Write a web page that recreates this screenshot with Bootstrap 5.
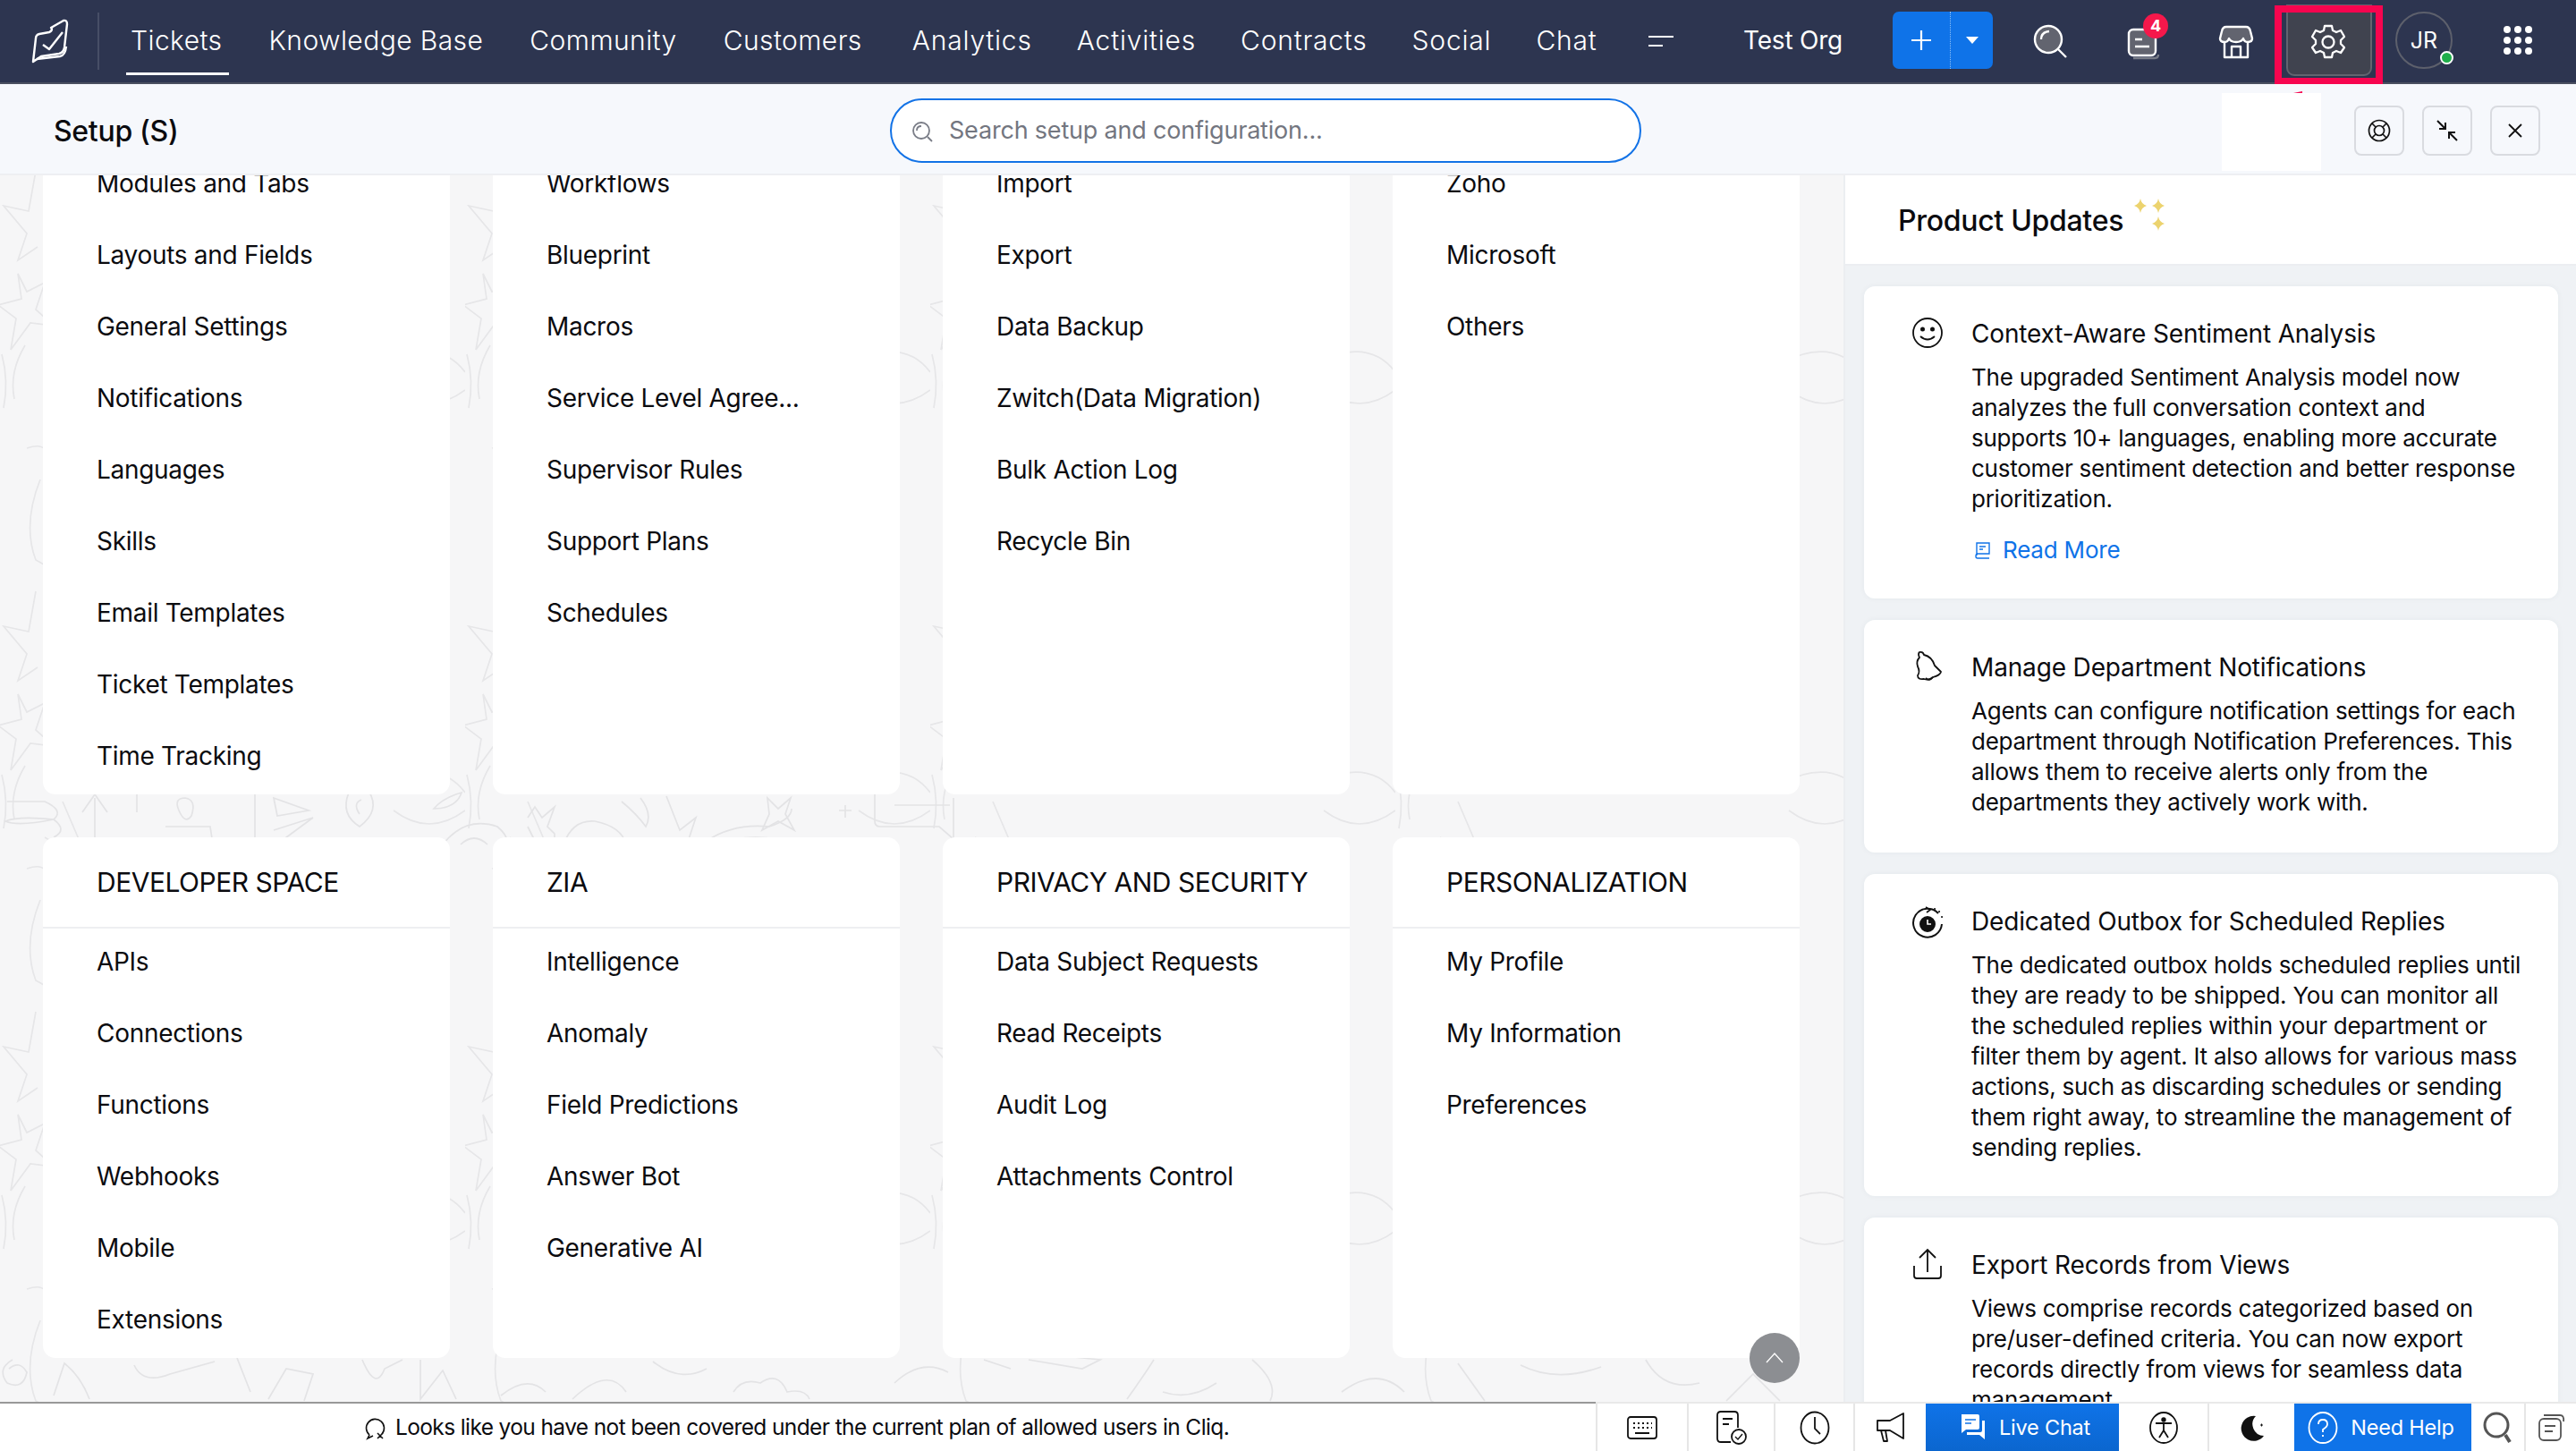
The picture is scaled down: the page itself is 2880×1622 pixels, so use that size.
<!DOCTYPE html>
<html lang="en">
<head>
  <meta charset="UTF-8">
  <meta name="viewport" content="width=device-width, initial-scale=1.0">
  <title>Setup</title>
  <link href="https://cdn.jsdelivr.net/npm/bootstrap@5.3.0/dist/css/bootstrap.min.css" rel="stylesheet">
  <script src="https://cdn.jsdelivr.net/npm/bootstrap@5.3.0/dist/js/bootstrap.bundle.min.js"></script>
  <style>
    html, body { height: 100%; }
    body {
      font-family: Inter, "Liberation Sans", sans-serif;
      color: #0b0b0f;
      overflow: hidden;
      letter-spacing: -0.2px;
    }
    svg { display: block; }
    .app-shell { height: 1622px; }

    /* top bar */
    .topbar { height: 94px; background: #2d3550; border-bottom: 2px solid #4a4f5f; color: #fff; position: relative; }
    .top-logo { width: 111px; height: 64px; border-right: 2px solid #474e66; padding-left: 35px; }
    .top-nav { padding-left: 9px; height: 92px; }
    .top-link { color: #fff; font-size: 30px; text-decoration: none; height: 100%; line-height: 90px; padding: 0 26px; letter-spacing: .42px; font-weight: 300; position: relative; }
    .top-link:nth-child(n+5) { letter-spacing: .8px; padding: 0 25px; }
    .top-link:nth-child(5) { margin-left: 5px; }
    .top-link.active::after { content: ""; position: absolute; left: 21px; right: 19px; top: 81px; height: 3px; background: #fff; }
    .nav-more { margin-left: 31px; }
    .org-name { font-size: 28px; position: absolute; left: 1949px; top: 24px; font-weight: 400; }
    .add-btn { position: absolute; left: 2116px; top: 13px; width: 112px; height: 64px; background: #0f73e8; border-radius: 7px; }
    .add-btn span { border-right: 1px dotted #8fc0f5; width: 65px; }
    .top-icon { position: absolute; top: 14px; width: 64px; height: 64px; }
    .count-pill { position: absolute; left: 2396px; top: 15px; width: 28px; height: 28px; border-radius: 50%; background: #f5184b; color: #fff; font-size: 18px; font-weight: 700; text-align: center; line-height: 28px; letter-spacing: 0; }
    .gear-box { position: absolute; left: 2556px; top: 5px; width: 96px; height: 80px; background: #40434f; border: 2px solid #62646f; border-radius: 0 0 9px 9px; }
    .mark-box { position: absolute; left: 2543px; top: 6px; width: 121px; height: 89px; border: 8px solid #f7054f; }
    .avatar-ring { position: absolute; left: 2678px; top: 13px; width: 64px; height: 64px; border: 2px solid #5d606c; border-radius: 50%; font-size: 25px; line-height: 60px; text-align: center; letter-spacing: 0; }
    .online-dot { position: absolute; left: 2728px; top: 57px; width: 15px; height: 15px; border-radius: 50%; background: #1fae4a; border: 2px solid #fff; }
    .apps-grid { position: absolute; left: 2799px; top: 29px; display: grid; grid-template-columns: repeat(3, 8px); gap: 4px; }
    .apps-grid i { width: 8px; height: 8px; border-radius: 50%; background: #fff; }

    /* setup header */
    .setup-head { height: 102px; background: #f6f8fc; border-bottom: 2px solid #eeeff2; position: relative; flex: none; }
    .setup-title { font-size: 32px; font-weight: 500; padding-left: 60px; line-height: 106px; letter-spacing: -.3px; }
    .setup-search { position: absolute; left: 995px; top: 16px; width: 840px; height: 72px; background: #fff; border: 2px solid #1272e6; border-radius: 36px; padding-left: 20px; color: #737680; font-size: 27px; padding-top: 1px; }
    .blank-box { position: absolute; left: 2484px; top: 10px; width: 111px; height: 87px; background: #fff; }
    .blank-tip { position: absolute; left: 2564px; top: 8px; width: 0; height: 0; border-left: 10px solid transparent; border-bottom: 2px solid #f7054f; }
    .head-btn { position: absolute; top: 24px; width: 56px; height: 56px; border: 2px solid #d9dbe0; border-radius: 8px; background: #f6f8fc; }

    /* setup cards */
    .setup-body { height: 1371px; flex: none; min-height: 0; }
    .setup-left { width: 2061px; background: #f6f6f7; position: relative; overflow: hidden; flex: none; }
    .doodles { position: absolute; inset: 0; width: 100%; height: 100%; }
    .setup-grid { position: relative; display: grid; grid-template-columns: repeat(4, 455px); column-gap: 48px; row-gap: 48px; padding: 0 0 0 48px; margin-top: -32px; }
    .setup-card { background: #fff; border-radius: 0 0 14px 14px; padding-bottom: 4px; }
    .setup-card.lower { border-radius: 14px; padding-bottom: 3px; }
    .setup-card-head { height: 102px; border-bottom: 2px solid #eeeff1; padding-left: 60px; font-size: 30px; line-height: 100px; letter-spacing: -.5px; }
    .setup-list { list-style: none; margin: -3px 0 0; padding: 0; }
    .upper .setup-list { margin-top: 0; }
    .setup-list li { height: 80px; line-height: 80px; padding: 0 0 0 60px; font-size: 28px; white-space: nowrap; letter-spacing: -.3px; }
    .upper .setup-list li { padding-top: 1px; }
    .to-top { position: absolute; left: 1956px; top: 1294px; width: 56px; height: 56px; border-radius: 50%; background: #8c8e92; display: flex; align-items: center; justify-content: center; }

    /* updates panel */
    .updates { width: 819px; background: #eff2f5; border-left: 2px solid #eceef1; overflow: hidden; flex: none; }
    .updates-head { height: 101px; background: #fff; border-bottom: 2px solid #eceef1; padding-left: 59px; font-size: 32px; font-weight: 500; line-height: 101px; position: relative; letter-spacing: -.3px; }
    .sparkles { position: absolute; left: 322px; top: 20px; }
    .update-list { padding: 23px 20px 0 21px; gap: 24px; }
    .update-item { background: #fff; border-radius: 12px; padding: 33px 20px 0 120px; position: relative; box-shadow: 0 0 6px rgba(40,50,70,.05); }
    .update-icon { position: absolute; left: 53px; top: 34px; }
    .update-item h6 { font-size: 28px; line-height: 40px; font-weight: 400; margin: 0 0 12px; letter-spacing: -.15px; color: #0b0b0f; }
    .update-item p { font-size: 26px; line-height: 34px; margin: 0; letter-spacing: -.25px; max-width: 620px; }
    .read-more { color: #0f73e8; font-size: 26px; text-decoration: none; margin: 20px 0 0 4px; gap: 13px; }

    /* footer */
    .bottom-bar { height: 55px; flex: none; background: #fff; position: relative; border-top: 2px solid #e9e9e9; }
    .bottom-line { position: absolute; left: 0; top: -2px; width: 1784px; height: 2px; background: #999; }
    .cliq-msg { width: 1784px; padding-left: 407px; gap: 9px; font-size: 24.500px; letter-spacing: -.62px; }
    .foot-cell { height: 53px; border-left: 2px solid #e6e6e6; display: flex; align-items: center; justify-content: center; flex: none; }
    .foot-blue { background: #0f73e8; color: #fff; font-size: 23.500px; gap: 14px; border: 0; }
    .foot-blue.chat { background: linear-gradient(#0f73e8, #0b66cf); padding-left: 6px; }
  </style>
</head>
<body>
  <div class="app-shell d-flex flex-column">

    <header class="topbar d-flex align-items-center flex-none">
      <div class="top-logo d-flex align-items-center">
        <svg width="42" height="50" viewBox="0 0 42 50" fill="none" stroke="#fff" stroke-width="2.4" stroke-linejoin="round"><path d="M22 10L36 2Q40 1 40 6L37 32Q36 38 31 39L11 42L2 48L5 22Q5 18 9 17L20 15Q23 14 23 11Z"/><path d="M13 29L20 34L35 15"/><path d="M6 45L32 42Q38 41 39 31"/></svg>
      </div>
      <nav class="top-nav d-flex align-items-center">
        <a class="top-link active" href="#">Tickets</a>
        <a class="top-link" href="#">Knowledge Base</a>
        <a class="top-link" href="#">Community</a>
        <a class="top-link" href="#">Customers</a>
        <a class="top-link" href="#">Analytics</a>
        <a class="top-link" href="#">Activities</a>
        <a class="top-link" href="#">Contracts</a>
        <a class="top-link" href="#">Social</a>
        <a class="top-link" href="#">Chat</a>
        <svg class="nav-more" width="30" height="14" viewBox="0 0 30 14" stroke="#fff" stroke-width="2"><path d="M1 2H29M1 12H17"/></svg>
      </nav>
      <span class="org-name">Test Org</span>
      <div class="add-btn d-flex">
        <span class="d-flex align-items-center justify-content-center">
          <svg width="24" height="24" viewBox="0 0 24 24" stroke="#fff" stroke-width="2.2"><path d="M12 1V23M1 12H23"/></svg>
        </span>
        <div class="flex-grow-1 d-flex align-items-center justify-content-center">
          <svg width="14" height="10" viewBox="0 0 14 10" fill="#fff"><path d="M0 1H14L7 9Z"/></svg>
        </div>
      </div>
      <svg class="top-icon" style="left:2260px" viewBox="0 0 64 64" fill="none" stroke="#fff" stroke-width="2.4"><circle cx="30" cy="30" r="15" fill="#62646f"/><path d="M41 41L50 50M22 30Q22 22 31 21"/></svg>
      <svg class="top-icon" style="left:2361px" viewBox="0 0 64 64" fill="none" stroke="#fff" stroke-width="2.4"><rect x="19" y="19" width="30" height="29" rx="5" fill="#62646f"/><path d="M26 30H34M26 38H42"/><path d="M24 51H48Q52 51 52 47" stroke="#777b87"/></svg>
      <span class="count-pill">4</span>
      <svg class="top-icon" style="left:2468px" viewBox="0 0 64 64" fill="none" stroke="#fff" stroke-width="2.4" stroke-linejoin="round"><path d="M21 16H43Q47 16 48 21L50 29Q50 33 45 33Q41 33 40 29Q38 33 32 33Q26 33 24 29Q23 33 19 33Q14 33 14 29L16 21Q17 16 21 16Z" fill="#62646f"/><path d="M19 34V50H45V34M27 50V38H37V50"/></svg>
      <div class="gear-box"></div>
      <svg class="top-icon" style="left:2571px" viewBox="0 0 64 64" fill="none" stroke="#fff" stroke-width="2.3" stroke-linejoin="round"><path d="M28 17H36L37 22L41 24L46 22L50 29L46 33V37L50 41L46 47L41 45L37 47L36 52H28L27 47L23 45L18 47L14 41L18 37V33L14 29L18 22L23 24L27 22Z" transform="translate(0 -2)"/><circle cx="32" cy="33" r="6.5"/></svg>
      <div class="mark-box"></div>
      <div class="avatar-ring">JR</div>
      <span class="online-dot"></span>
      <div class="apps-grid"><i></i><i></i><i></i><i></i><i></i><i></i><i></i><i></i><i></i></div>
    </header>

    <div class="setup-head">
      <div class="setup-title">Setup (S)</div>
      <div class="setup-search d-flex align-items-center">
        <svg class="me-3" width="28" height="28" viewBox="0 0 28 28" fill="none" stroke="#7a7d87" stroke-width="1.8"><circle cx="13" cy="13" r="9"/><path d="M20 20L25 25M8 13Q8 8 13 8"/></svg>
        <span>Search setup and configuration...</span>
      </div>
      <div class="blank-box"></div>
      <span class="blank-tip"></span>
      <div class="head-btn d-flex align-items-center justify-content-center" style="left:2632px">
        <svg width="26" height="26" viewBox="0 0 26 26" fill="none" stroke="#111" stroke-width="1.7"><circle cx="13" cy="13" r="11.5"/><circle cx="13" cy="13" r="5.5"/><path d="M5 5L9 9M21 5L17 9M5 21L9 17M21 21L17 17"/></svg>
      </div>
      <div class="head-btn d-flex align-items-center justify-content-center" style="left:2708px">
        <svg width="24" height="24" viewBox="0 0 24 24" fill="none" stroke="#111" stroke-width="2"><path d="M1 1L10 10M3 10H10V3"/><path d="M23 23L14 14M21 14H14V21"/></svg>
      </div>
      <div class="head-btn d-flex align-items-center justify-content-center" style="left:2784px">
        <svg width="18" height="18" viewBox="0 0 18 18" stroke="#111" stroke-width="1.8"><path d="M2 2L16 16M16 2L2 16"/></svg>
      </div>
    </div>

    <main class="setup-body d-flex">
      <section class="setup-left">
        <svg class="doodles" xmlns="http://www.w3.org/2000/svg">
          <defs>
            <pattern id="doodleTile" width="520" height="470" patternUnits="userSpaceOnUse" patternTransform="translate(0 -10)">
              <g fill="none" stroke="#e6e6e8" stroke-width="1.7">
                <path d="M40 5L32 50L4 44L30 75L20 105L42 90"/>
                <path d="M20 120L24 148L-2 155L18 170L12 205L34 175L60 178L40 160L50 130L30 140Z"/>
                <path d="M2 210Q10 240 4 270M28 200Q10 230 16 260"/>
                <path d="M45 350Q25 400 40 440Q80 460 40 480M30 315Q60 305 50 340"/>
                <path d="M70 240l30 70 -50 -30M120 90q40 -40 60 20M170 180a30 30 0 1 0 60 0a30 30 0 1 0 -60 0M185 180a15 15 0 1 1 30 0"/>
                <path d="M290 90l20 50 50 5 -38 32 12 50 -44 -28 -44 28 12 -50 -38 -32 50 -5z"/>
                <path d="M400 60q50 20 30 80q-40 30 -50 -10q10 -40 40 -20M430 220q60 -30 90 10M440 250q40 30 80 0"/>
              </g>
            </pattern>
          </defs>
          <rect width="100%" height="100%" fill="url(#doodleTile)"/>
          <!-- doodles seen in the band between the two card rows -->
          <g fill="none" stroke="#e3e3e5" stroke-width="1.7" transform="translate(0 684)">
            <path d="M8 16H50Q72 26 60 36Q20 44 6 38Q20 32 60 36Q76 48 60 56"/>
            <path d="M106 64V12M92 28L106 8L120 28"/>
            <path d="M153 2V28"/>
            <path d="M200 26Q194 12 207 12Q220 14 214 32Q207 42 200 26ZM185 44H235L238 64"/>
            <path d="M285 2V64"/>
            <path d="M306 12L345 26L310 32ZM306 48L350 34L312 62"/>
            <path d="M390 6Q380 30 402 44Q426 26 412 4M402 30Q394 18 404 14"/>
            <path d="M485 24Q495 12 516 6Q510 24 485 24Z"/>
            <path d="M495 64Q520 32 556 44Q570 56 566 64M515 64Q530 50 545 64"/>
            <path d="M590 34L598 22L606 34L620 22L612 44L620 52V64M590 44L600 64"/>
            <path d="M630 64Q640 36 665 38Q695 44 700 64M650 64Q662 50 680 64"/>
            <path d="M695 16Q712 30 722 44Q730 30 716 12M745 10L760 48L778 34L768 64"/>
            <path d="M790 60Q820 40 860 44Q885 36 885 24M802 64Q830 52 870 58"/>
            <path d="M858 12L870 24L884 12L878 30L888 48L870 38L852 48L860 30Z"/>
            <path d="M945 20V34M938 26H952"/>
            <path d="M978 4V38Q978 44 984 44H1050L1066 58V12M1000 20H1062"/>
          </g>
          <!-- and along the bottom, just above the status bar -->
          <g fill="none" stroke="#e3e3e5" stroke-width="1.7" transform="translate(0 1320)">
            <path d="M14 4Q-4 14 8 30Q26 38 30 18Q22 4 10 14M60 44L72 8Q90 22 100 48"/>
            <path d="M150 10Q160 32 190 20L240 6M265 2L280 40M300 48L320 14L350 20L340 50"/>
            <path d="M405 4Q420 40 430 14L450 4M470 4V48L495 16L510 48"/>
            <path d="M560 44Q590 20 610 40M640 48Q680 10 700 40M730 6Q760 30 790 14"/>
            <path d="M820 40Q830 24 850 30Q870 16 880 40Q900 36 905 48"/>
            <path d="M1000 30Q1030 2 1060 18M1100 4L1130 14M1150 4L1210 14L1230 4L1190 0"/>
            <path d="M1260 48Q1280 20 1290 4M1300 40Q1330 50 1360 30M1400 4Q1430 30 1420 50"/>
            <path d="M1500 40Q1540 10 1570 40M1630 8L1660 50M1700 10Q1740 30 1790 12"/>
            <path d="M1840 4Q1860 40 1900 30M1930 50L1960 20L1990 50"/>
          </g>
        </svg>

        <div class="setup-grid">
          <div class="setup-card upper">
            <ul class="setup-list">
              <li>Modules and Tabs</li><li>Layouts and Fields</li><li>General Settings</li><li>Notifications</li><li>Languages</li><li>Skills</li><li>Email Templates</li><li>Ticket Templates</li><li>Time Tracking</li>
            </ul>
          </div>
          <div class="setup-card upper">
            <ul class="setup-list">
              <li>Workflows</li><li>Blueprint</li><li>Macros</li><li>Service Level Agree...</li><li>Supervisor Rules</li><li>Support Plans</li><li>Schedules</li>
            </ul>
          </div>
          <div class="setup-card upper">
            <ul class="setup-list">
              <li>Import</li><li>Export</li><li>Data Backup</li><li>Zwitch(Data Migration)</li><li>Bulk Action Log</li><li>Recycle Bin</li>
            </ul>
          </div>
          <div class="setup-card upper">
            <ul class="setup-list">
              <li>Zoho</li><li>Microsoft</li><li>Others</li>
            </ul>
          </div>

          <div class="setup-card lower">
            <div class="setup-card-head">DEVELOPER SPACE</div>
            <ul class="setup-list">
              <li>APIs</li><li>Connections</li><li>Functions</li><li>Webhooks</li><li>Mobile</li><li>Extensions</li>
            </ul>
          </div>
          <div class="setup-card lower">
            <div class="setup-card-head">ZIA</div>
            <ul class="setup-list">
              <li>Intelligence</li><li>Anomaly</li><li>Field Predictions</li><li>Answer Bot</li><li>Generative AI</li>
            </ul>
          </div>
          <div class="setup-card lower">
            <div class="setup-card-head">PRIVACY AND SECURITY</div>
            <ul class="setup-list">
              <li>Data Subject Requests</li><li>Read Receipts</li><li>Audit Log</li><li>Attachments Control</li>
            </ul>
          </div>
          <div class="setup-card lower">
            <div class="setup-card-head">PERSONALIZATION</div>
            <ul class="setup-list">
              <li>My Profile</li><li>My Information</li><li>Preferences</li>
            </ul>
          </div>
        </div>

        <div class="to-top">
          <svg width="20" height="12" viewBox="0 0 20 12" fill="none" stroke="#fff" stroke-width="1.3"><path d="M1 11L10 1L19 11"/></svg>
        </div>
      </section>

      <aside class="updates">
        <div class="updates-head">
          Product Updates
          <svg class="sparkles" width="44" height="44" viewBox="0 0 44 44" fill="#ecd36e"><path d="M8 6Q9 12 15 14Q9 16 8 22Q7 16 1 14Q7 12 8 6Z"/><path d="M28 6Q29 12 35 14Q29 16 28 22Q27 16 21 14Q27 12 28 6Z"/><path d="M28 26Q29 32 35 34Q29 36 28 42Q27 36 21 34Q27 32 28 26Z"/></svg>
        </div>
        <div class="update-list d-flex flex-column">
          <article class="update-item" style="height:349px">
            <svg class="update-icon" width="36" height="36" viewBox="0 0 36 36" fill="none" stroke="#111" stroke-width="1.8"><circle cx="18" cy="18" r="16"/><circle cx="12.5" cy="14" r="1.6" fill="#111"/><circle cx="23.5" cy="14" r="1.6" fill="#111"/><path d="M10 22Q18 29 26 22"/></svg>
            <h6>Context-Aware Sentiment Analysis</h6>
            <p>The upgraded Sentiment Analysis model now analyzes the full conversation context and supports 10+ languages, enabling more accurate customer sentiment detection and better response prioritization.</p>
            <a class="read-more d-inline-flex align-items-center" href="#">
              <svg width="18" height="20" viewBox="0 0 18 20" fill="none" stroke="#0f73e8" stroke-width="1.4"><path d="M2 16V2H16V14H3Q1 14 1 17Q1 19 3 19H16M5 6H12M5 9H9"/></svg>
              Read More
            </a>
          </article>
          <article class="update-item" style="height:260px">
            <svg class="update-icon" width="36" height="36" viewBox="0 0 36 36" fill="none" stroke="#111" stroke-width="1.8" stroke-linejoin="round"><path d="M9 2Q13 1 14 5Q23 7 26 17L33 24Q32 28 24 30Q20 34 14 32Q7 33 7 28Q10 24 7 18Q5 12 9 8Q7 4 9 2Z"/><path d="M16 31Q20 35 24 30"/></svg>
            <h6>Manage Department Notifications</h6>
            <p>Agents can configure notification settings for each department through Notification Preferences. This allows them to receive alerts only from the departments they actively work with.</p>
          </article>
          <article class="update-item" style="height:360px">
            <svg class="update-icon" width="36" height="38" viewBox="0 0 36 38" fill="none" stroke="#111" stroke-width="2"><path d="M30 9A16 16 0 1 0 34 21" transform="translate(0 1)"/><path d="M16 3L21 6L17 9" stroke-width="1.6"/><circle cx="18" cy="22" r="8" fill="#111"/><path d="M18 17V22H22" stroke="#fff" stroke-width="1.6"/><path d="M26 5h.1M31 8h.1M34 14h.1" stroke-linecap="round"/></svg>
            <h6>Dedicated Outbox for Scheduled Replies</h6>
            <p>The dedicated outbox holds scheduled replies until they are ready to be shipped. You can monitor all the scheduled replies within your department or filter them by agent. It also allows for various mass actions, such as discarding schedules or sending them right away, to streamline the management of sending replies.</p>
          </article>
          <article class="update-item" style="height:300px">
            <svg class="update-icon" width="36" height="36" viewBox="0 0 36 36" fill="none" stroke="#111" stroke-width="1.8"><path d="M18 27V3M9 11L18 2L27 11"/><path d="M3 20V31Q3 34 6 34H30Q33 34 33 31V20"/></svg>
            <h6>Export Records from Views</h6>
            <p>Views comprise records categorized based on pre/user-defined criteria. You can now export records directly from views for seamless data management.</p>
          </article>
        </div>
      </aside>
    </main>

    <footer class="bottom-bar d-flex align-items-center">
      <span class="bottom-line"></span>
      <div class="cliq-msg d-flex align-items-center">
        <svg width="26" height="28" viewBox="0 0 26 28" fill="none" stroke="#111" stroke-width="1.6"><path d="M6 22A10 10 0 1 1 20 21"/><path d="M6 22L4 26L10 23M15 20L21 26M21 20L15 26"/></svg>
        <span>Looks like you have not been covered under the current plan of allowed users in Cliq.</span>
      </div>
      <div class="foot-cell" style="width:102px"><svg width="34" height="26" viewBox="0 0 34 26" fill="none" stroke="#111" stroke-width="1.8"><rect x="1" y="1" width="32" height="24" rx="3"/><path d="M7 8h2M12 8h2M17 8h2M22 8h2M27 8h1M7 13h2M12 13h2M17 13h2M22 13h2M27 13h1M9 19H25"/></svg></div>
      <div class="foot-cell" style="width:97px"><svg width="36" height="40" viewBox="0 0 36 40" fill="none" stroke="#111" stroke-width="1.8"><path d="M17 36H6Q2 36 2 32V6Q2 2 6 2H21Q25 2 25 6V20"/><path d="M8 10H19M8 16H15"/><circle cx="26" cy="30" r="8"/><path d="M22 30L25 33L30 27" stroke-width="1.4"/></svg></div>
      <div class="foot-cell" style="width:89px"><svg width="34" height="38" viewBox="0 0 34 38" fill="none" stroke="#111" stroke-width="1.8"><ellipse cx="17" cy="19" rx="15.5" ry="17.5"/><path d="M17 7V20L23 26"/></svg></div>
      <div class="foot-cell" style="width:81px"><svg width="34" height="36" viewBox="0 0 34 36" fill="none" stroke="#111" stroke-width="1.8" stroke-linejoin="round"><path d="M31 2V30L16 21H2V10H16Z"/><path d="M6 21L9 33H13L11 21"/></svg></div>
      <div class="foot-cell foot-blue chat" style="width:216px">
        <svg width="30" height="30" viewBox="0 0 30 30" fill="#fff"><path d="M2 0H20Q22 0 22 2V15Q22 17 20 17H7L2 21Z"/><path d="M25 7H28V28L22 23H8V20H23Q25 20 25 18Z"/><path d="M6 6H18M6 10H13" stroke="#0f73e8" stroke-width="1.6"/></svg>
        <span>Live Chat</span>
      </div>
      <div class="foot-cell" style="width:99px;border:0"><svg width="32" height="36" viewBox="0 0 32 36" fill="none" stroke="#111" stroke-width="1.8"><ellipse cx="16" cy="18" rx="15" ry="17"/><circle cx="16" cy="9" r="1.8" fill="#111"/><path d="M7 13H25M16 13V21L11 29M16 21L21 29"/></svg></div>
      <div class="foot-cell" style="width:97px"><svg width="30" height="34" viewBox="0 0 30 34" fill="#111"><path d="M19 4A14 14 0 1 0 28 26A13 13 0 0 1 19 4Z"/><path d="M24 14h3M25.500 12.500v3" stroke="#111" stroke-width="1"/></svg></div>
      <div class="foot-cell foot-blue" style="width:198px;padding-right:4px">
        <svg width="34" height="36" viewBox="0 0 34 36" fill="none" stroke="#fff" stroke-width="1.8"><ellipse cx="17" cy="18" rx="15.500" ry="17"/><path d="M12 14Q12 9 17 9Q22 9 22 14Q22 17 17 20V23M17 26V28"/></svg>
        <span>Need Help</span>
      </div>
      <div class="foot-cell" style="width:59px;border:0"><svg width="36" height="40" viewBox="0 0 36 40" fill="none" stroke="#555" stroke-width="3"><circle cx="16" cy="17" r="13"/><path d="M26 28L31 36" stroke-width="4"/></svg></div>
      <div class="foot-cell flex-grow-1"><svg width="32" height="34" viewBox="0 0 32 34" fill="none" stroke="#555" stroke-width="1.8"><rect x="3" y="7" width="24" height="24" rx="5"/><path d="M8 3H26Q31 3 30 10M9 15H21M9 21H18"/></svg></div>
    </footer>
  </div>
</body>
</html>
